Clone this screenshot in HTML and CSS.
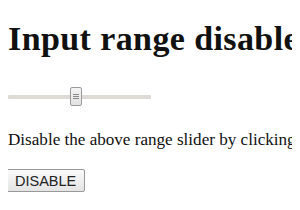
FILE: index.html
```html
<!DOCTYPE html>
<html>
<head>
<meta charset="utf-8">
<link rel="stylesheet" href="styles.css">
</head>
<body>
<h1 class="title">Input range disable</h1>
<input class="slider" type="range" min="0" max="100" value="47">
<p class="note">Disable the above range slider by clicking the button.</p>
<button class="btn">DISABLE</button>
</body>
</html>
```
FILE: styles.css
```css
html { background: #fff; overflow: hidden; }
body {
  margin: 8px;
  font-family: "Liberation Serif", "Times New Roman", serif;
  color: #111;
  white-space: nowrap;
}
.title {
  font-size: 34px;
  letter-spacing: 0.4px;
  font-weight: bold;
  margin: 12px 0 30px;
  line-height: 37px;
}
.slider {
  -webkit-appearance: none;
  appearance: none;
  display: block;
  width: 143px;
  height: 20px;
  margin: 0;
  background: transparent;
}
.slider::-webkit-slider-runnable-track {
  height: 4px;
  background: #dedbd6;
  border-radius: 1px;
}
.slider::-webkit-slider-thumb {
  -webkit-appearance: none;
  width: 12px;
  height: 19px;
  margin-top: -8px;
  border: 1px solid #9a9a9a;
  border-radius: 2px;
  box-sizing: border-box;
  background:
    linear-gradient(#8a8a8a, #8a8a8a) center 6px / 6px 1px no-repeat,
    linear-gradient(#8a8a8a, #8a8a8a) center 8px / 6px 1px no-repeat,
    linear-gradient(#8a8a8a, #8a8a8a) center 10px / 6px 1px no-repeat,
    linear-gradient(#f4f4f4, #e2e2e2);
}
.note {
  font-size: 17.1px;
  margin: 23px 0 0;
  line-height: 20px;
}
.btn {
  margin: 19px 0 0 -2px;
  font-family: "Liberation Sans", Arial, sans-serif;
  font-size: 14.5px;
  color: #222;
  padding: 1px 8px;
  height: 23px;
  border: 1px solid #999;
  border-radius: 2px;
  background: linear-gradient(#fafafa, #e4e4e4);
}
```
